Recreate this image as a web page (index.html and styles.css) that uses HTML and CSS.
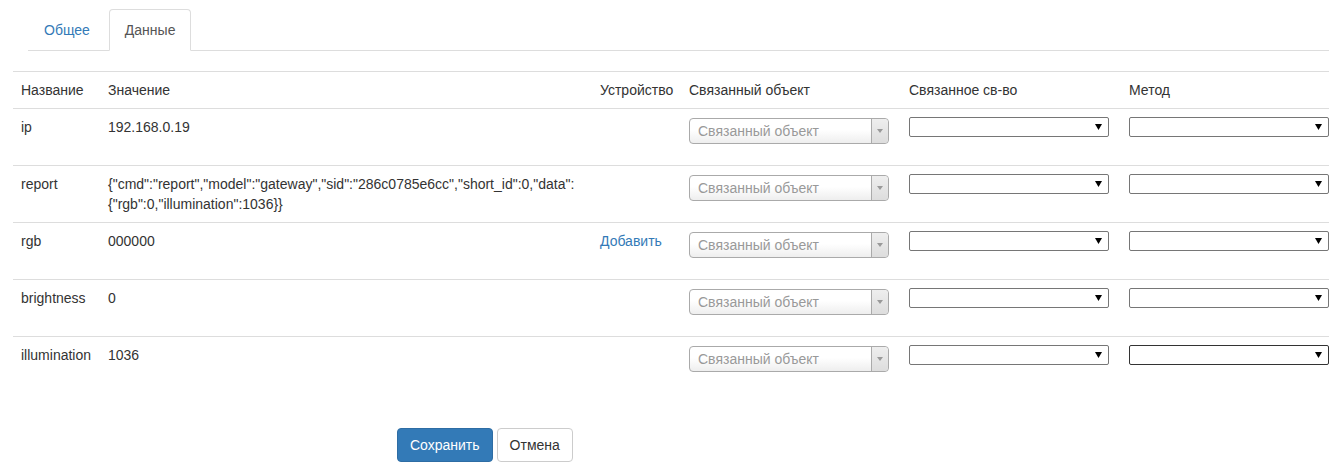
FILE: index.html
```html
<!DOCTYPE html>
<html lang="ru">
<head>
<meta charset="utf-8">
<title>Данные</title>
<link rel="stylesheet" href="styles.css">
</head>
<body>
<ul class="tabs">
  <li class="tab"><a href="#">Общее</a></li>
  <li class="tab active"><a href="#">Данные</a></li>
</ul>

<table class="data-table">
  <colgroup>
    <col class="c-name"><col class="c-value"><col class="c-dev"><col class="c-obj"><col class="c-prop"><col class="c-method">
  </colgroup>
  <thead>
    <tr>
      <th>Название</th><th>Значение</th><th>Устройство</th><th>Связанный объект</th><th>Связанное св-во</th><th>Метод</th>
    </tr>
  </thead>
  <tbody>
    <tr>
      <td><div class="cell">ip</div></td>
      <td>192.168.0.19</td>
      <td></td>
      <td><div class="s2"><span class="s2-text">Связанный объект</span><span class="s2-arrow"><svg width="6" height="4" viewBox="0 0 6 4"><path d="M0 0H6L3 4Z" fill="#999"/></svg></span></div></td>
      <td><div class="nsel"><svg width="7" height="6" viewBox="0 0 7 6"><path d="M0 0H7L3.5 6Z" fill="#000"/></svg></div></td>
      <td><div class="nsel"><svg width="7" height="6" viewBox="0 0 7 6"><path d="M0 0H7L3.5 6Z" fill="#000"/></svg></div></td>
    </tr>
    <tr>
      <td><div class="cell">report</div></td>
      <td class="json">{"cmd":"report","model":"gateway","sid":"286c0785e6cc","short_id":0,"data":{"rgb":0,"illumination":1036}}</td>
      <td></td>
      <td><div class="s2"><span class="s2-text">Связанный объект</span><span class="s2-arrow"><svg width="6" height="4" viewBox="0 0 6 4"><path d="M0 0H6L3 4Z" fill="#999"/></svg></span></div></td>
      <td><div class="nsel"><svg width="7" height="6" viewBox="0 0 7 6"><path d="M0 0H7L3.5 6Z" fill="#000"/></svg></div></td>
      <td><div class="nsel"><svg width="7" height="6" viewBox="0 0 7 6"><path d="M0 0H7L3.5 6Z" fill="#000"/></svg></div></td>
    </tr>
    <tr>
      <td><div class="cell">rgb</div></td>
      <td>000000</td>
      <td><a class="link" href="#">Добавить</a></td>
      <td><div class="s2"><span class="s2-text">Связанный объект</span><span class="s2-arrow"><svg width="6" height="4" viewBox="0 0 6 4"><path d="M0 0H6L3 4Z" fill="#999"/></svg></span></div></td>
      <td><div class="nsel"><svg width="7" height="6" viewBox="0 0 7 6"><path d="M0 0H7L3.5 6Z" fill="#000"/></svg></div></td>
      <td><div class="nsel"><svg width="7" height="6" viewBox="0 0 7 6"><path d="M0 0H7L3.5 6Z" fill="#000"/></svg></div></td>
    </tr>
    <tr>
      <td><div class="cell">brightness</div></td>
      <td>0</td>
      <td></td>
      <td><div class="s2"><span class="s2-text">Связанный объект</span><span class="s2-arrow"><svg width="6" height="4" viewBox="0 0 6 4"><path d="M0 0H6L3 4Z" fill="#999"/></svg></span></div></td>
      <td><div class="nsel"><svg width="7" height="6" viewBox="0 0 7 6"><path d="M0 0H7L3.5 6Z" fill="#000"/></svg></div></td>
      <td><div class="nsel"><svg width="7" height="6" viewBox="0 0 7 6"><path d="M0 0H7L3.5 6Z" fill="#000"/></svg></div></td>
    </tr>
    <tr>
      <td><div class="cell">illumination</div></td>
      <td>1036</td>
      <td></td>
      <td><div class="s2"><span class="s2-text">Связанный объект</span><span class="s2-arrow"><svg width="6" height="4" viewBox="0 0 6 4"><path d="M0 0H6L3 4Z" fill="#999"/></svg></span></div></td>
      <td><div class="nsel"><svg width="7" height="6" viewBox="0 0 7 6"><path d="M0 0H7L3.5 6Z" fill="#000"/></svg></div></td>
      <td><div class="nsel focus"><svg width="7" height="6" viewBox="0 0 7 6"><path d="M0 0H7L3.5 6Z" fill="#000"/></svg></div></td>
    </tr>
  </tbody>
</table>

<div class="actions">
  <button class="btn btn-primary" type="button">Сохранить</button>
  <button class="btn btn-default" type="button">Отмена</button>
</div>
</body>
</html>
```

FILE: styles.css
```css
html {
  overflow: hidden;
}
body {
  margin: 0;
  font-family: "Liberation Sans", Arial, sans-serif;
  font-size: 14px;
  line-height: 20px;
  color: #333;
  background: #fff;
}
.tabs {
  list-style: none;
  margin: 9px 0 0 28px;
  padding: 0;
  display: flex;
  border-bottom: 1px solid #ddd;
}
.tab {
  margin-bottom: -1px;
  margin-right: 3px;
}
.tab a {
  display: block;
  padding: 10px 15px;
  line-height: 20px;
  border: 1px solid transparent;
  border-radius: 4px 4px 0 0;
  color: #337ab7;
  text-decoration: none;
}
.tab.active a {
  color: #555;
  background: #fff;
  border-color: #ddd #ddd transparent;
}
.data-table {
  margin: 20px 0 0 13px;
  width: 1324px;
  table-layout: fixed;
  border-collapse: collapse;
  border-top: 1px solid #ddd;
}
.c-name { width: 87px; }
.c-value { width: 492px; }
.c-dev { width: 89px; }
.c-obj { width: 220px; }
.c-prop { width: 220px; }
.c-method { width: 216px; }
.data-table th {
  font-weight: normal;
  text-align: left;
  padding: 8px;
  line-height: 20px;
  white-space: nowrap;
}
.data-table td {
  padding: 8px;
  vertical-align: top;
  border-top: 1px solid #ddd;
  line-height: 20px;
}
.cell {
  min-height: 40px;
}
.json {
  overflow: visible;
}
.link {
  color: #337ab7;
  text-decoration: none;
}
.s2 {
  width: 200px;
  height: 26px;
  margin-top: 1px;
  box-sizing: border-box;
  border: 1px solid #aaa;
  border-radius: 4px;
  background: linear-gradient(to bottom, #fff 0%, #fff 45%, #eee 100%);
  display: flex;
  align-items: stretch;
}
.s2-text {
  flex: 1;
  padding-left: 8px;
  line-height: 24px;
  color: #999;
  white-space: nowrap;
  overflow: hidden;
}
.s2-arrow {
  width: 16px;
  border-left: 1px solid #aaa;
  border-radius: 0 4px 4px 0;
  background: linear-gradient(to bottom, #eee 0%, #ddd 100%);
  display: flex;
  align-items: center;
  justify-content: center;
}
.nsel {
  width: 200px;
  height: 20px;
  box-sizing: border-box;
  border: 1px solid #767676;
  border-radius: 2px;
  background: #fff;
  display: flex;
  align-items: center;
  justify-content: flex-end;
  padding-right: 6px;
}
.nsel.focus {
  border-color: #333;
}
.actions {
  display: flex;
  gap: 4px;
  margin-top: 35px;
  padding-left: 397px;
}
.btn {
  font-family: inherit;
  font-size: 14px;
  line-height: 20px;
  padding: 6px 12px;
  border: 1px solid transparent;
  border-radius: 4px;
  cursor: pointer;
}
.btn-primary {
  color: #fff;
  background: #337ab7;
  border-color: #2e6da4;
}
.btn-default {
  color: #333;
  background: #fff;
  border-color: #ccc;
}
```
